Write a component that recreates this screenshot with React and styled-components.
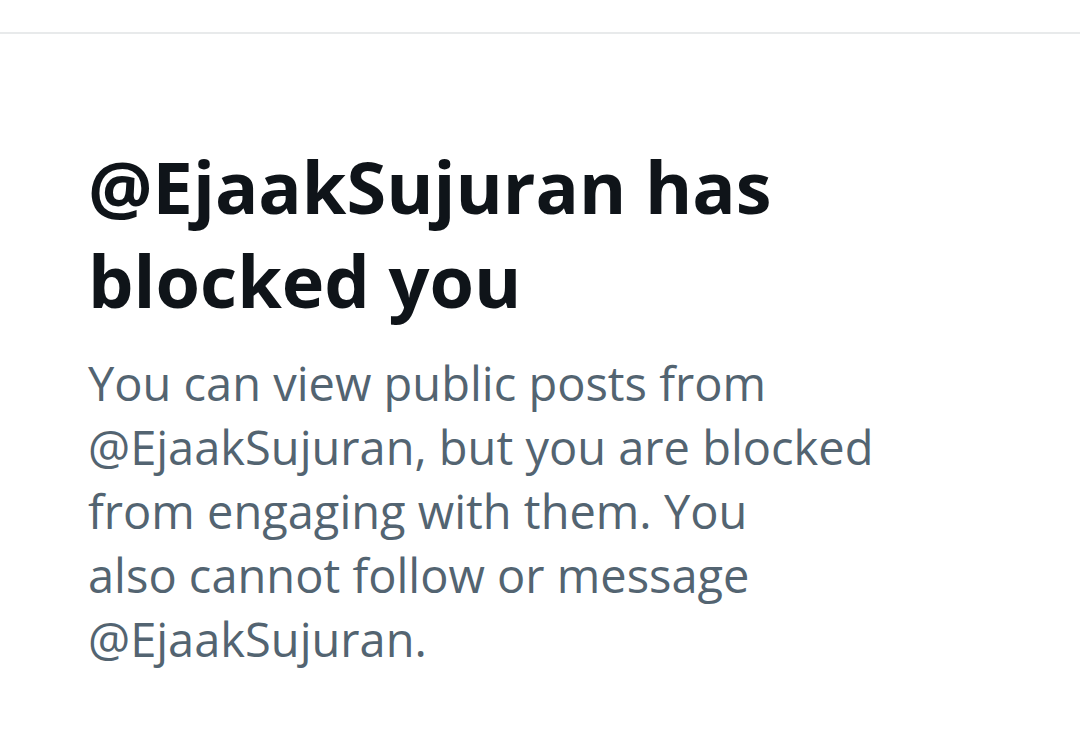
import React from "react";
import styled, { createGlobalStyle } from "styled-components";

const screenName = "@EjaakSujuran";

const App = () => {
    return (
        <>
            <GlobalStyle />
            <TabBorder />
            <EmptyState>
                <Title>{`${screenName} has blocked you`}</Title>
                <Description>
                    {`You can view public posts from ${screenName}, but you are blocked from engaging with them. You`}
                    <br />
                    {`also cannot follow or message ${screenName}.`}
                </Description>
            </EmptyState>
        </>
    );
};

const GlobalStyle = createGlobalStyle`
    body {
        margin: 0;
        background: #ffffff;
        font-family: "Open Sans", "Noto Sans", sans-serif;
    }
`;

const TabBorder = styled.header`
    height: 32px;
    border-bottom: 2px solid #e8eaeb;
`;

const EmptyState = styled.main`
    max-width: 800px;
    padding: 105px 88px 64px;
`;

const Title = styled.h1`
    margin: 0 0 24px;
    color: #0f1419;
    font-size: 72px;
    font-weight: 700;
    line-height: 94px;
`;

const Description = styled.p`
    margin: 0;
    color: #536471;
    font-size: 47px;
    font-weight: 400;
    line-height: 64px;
`;

export default App;
